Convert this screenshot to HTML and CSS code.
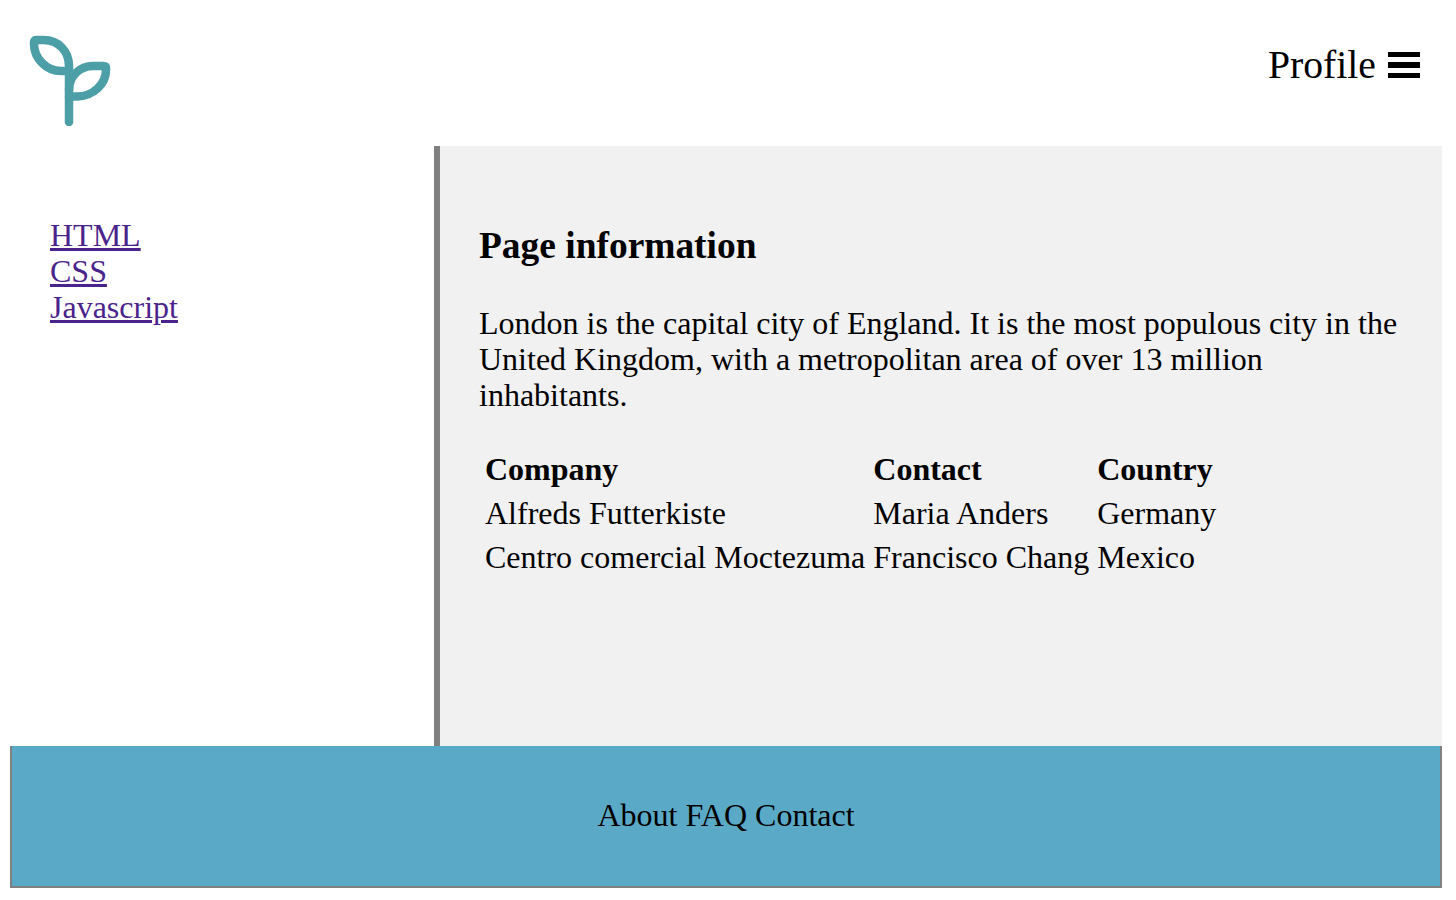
FILE: index.html
```html
<!DOCTYPE html>
<html lang="en">
<head>
  <meta charset="UTF-8" />
  <meta name="viewport" content="width=device-width, initial-scale=1.0" />
  <title>Page information</title>
  <link rel="stylesheet" href="styles.css">
</head>
<body>
  <div class="page">
    <header class="header">
      <svg class="logo" width="84" height="92" viewBox="0 0 84 92" fill="none" stroke="#4c9ea7" stroke-width="8.500" stroke-linecap="round" stroke-linejoin="round">
        <path d="M41 88V32C41 17 30 6 16 6H8C6.500 6 6 7 6 8.500V10C6 24 18 37 33 37H41" />
        <path d="M41 62.500H49C65 62.500 78 50 78 36V34C78 32.500 77 32 75 32H65C52 32 41 42 41 56" />
      </svg>
      <div class="profile">
        <span>Profile</span>
        <span class="burger"><i></i><i></i><i></i></span>
      </div>
    </header>
    <div class="middle">
      <nav class="sidebar">
        <a href="#">HTML</a>
        <a href="#">CSS</a>
        <a href="#">Javascript</a>
      </nav>
      <main class="content">
        <h3>Page information</h3>
        <p>London is the capital city of England. It is the most populous city in the United Kingdom, with a metropolitan area of over 13 million inhabitants.</p>
        <table>
          <tr><th>Company</th><th>Contact</th><th>Country</th></tr>
          <tr><td>Alfreds Futterkiste</td><td>Maria Anders</td><td>Germany</td></tr>
          <tr><td>Centro comercial Moctezuma</td><td>Francisco Chang</td><td>Mexico</td></tr>
        </table>
      </main>
    </div>
    <footer class="footer">About FAQ Contact</footer>
  </div>
</body>
</html>
```

FILE: styles.css
```css
body {
  margin: 0;
  font-family: "Liberation Serif", "Times New Roman", serif;
  font-size: 32px;
  line-height: 36px;
  color: #000;
  background: #fff;
}
.page {
  width: 1432px;
  margin-left: 10px;
}
.header {
  height: 146px;
  display: flex;
  justify-content: space-between;
  align-items: flex-start;
}
.logo {
  margin: 34px 0 0 18px;
}
.profile {
  display: flex;
  align-items: center;
  gap: 12px;
  margin: 44px 22px 0 0;
  font-size: 39.700px;
  line-height: 42px;
}
.burger {
  display: flex;
  flex-direction: column;
  gap: 5px;
  width: 32px;
}
.burger i {
  display: block;
  height: 5.500px;
  background: #000;
}
.middle {
  display: flex;
  height: 600px;
}
.sidebar {
  width: 384px;
  padding: 71px 0 0 40px;
  border-right: 6px solid #808080;
}
.sidebar a {
  display: block;
  width: fit-content;
  color: #4b238c;
}
.content {
  flex: 1;
  padding: 39px 40px 40px 39px;
  background: #f1f1f1;
}
.content h3 {
  margin: 40px 0 38px;
  font-size: 37.440px;
  line-height: 42px;
}
.content p {
  margin: 0 0 32px;
}
.content table {
  border-spacing: 4px;
}
.content th,
.content td {
  padding: 2px;
  text-align: left;
}
.footer {
  height: 138px;
  padding-bottom: 2px;
  display: flex;
  align-items: center;
  justify-content: center;
  background: #5aaac7;
  border: 2px solid #808080;
  border-top: 0;
}
```
